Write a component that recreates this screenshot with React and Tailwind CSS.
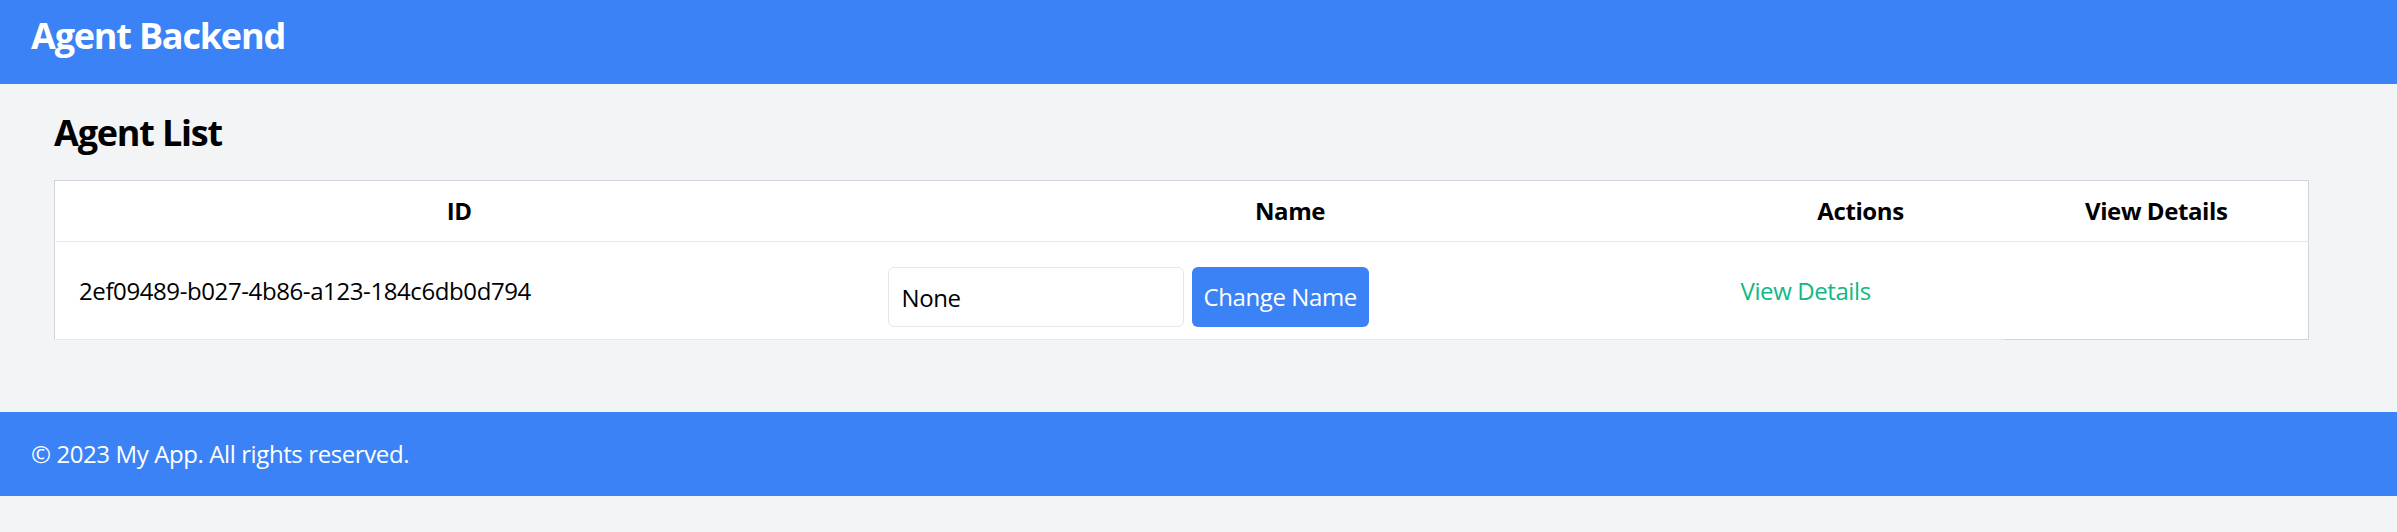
import { useState } from "react";

const agents = [
  { id: "2ef09489-b027-4b86-a123-184c6db0d794", name: "None" },
];

const AgentRow = ({ agent }) => {
  const [name, setName] = useState(agent.name);

  return (
    <tr>
      <td className="border-b border-[#e5e7eb] px-[24px] py-[12px]">{agent.id}</td>
      <td className="border-b border-[#e5e7eb] px-[24px] py-[12px]">
        <div className="mt-[13px] flex items-center gap-[8px]">
          <input
            type="text"
            value={name}
            onChange={(e) => setName(e.target.value)}
            className="h-[60px] w-[296px] rounded-[6px] border border-[#e5e7eb] bg-white px-[13px] text-[24px] leading-[36px] outline-none"
          />
          <button className="h-[60px] rounded-[6px] bg-[#3b82f6] px-[12px] text-[24px] leading-[36px] text-white">
            Change Name
          </button>
        </div>
      </td>
      <td className="border-b border-[#e5e7eb] px-[24px] py-[12px]">
        <a href="#" className="text-[#10b981]">View Details</a>
      </td>
    </tr>
  );
};

export default function App() {
  return (
    <div className="min-h-screen bg-[#f3f4f6] text-[24px] leading-[36px] tracking-[-0.4px] text-black [font-family:'Segoe_UI','Open_Sans',sans-serif]">
      <header className="h-[84px] bg-[#3b82f6] px-[31px] pt-[12px]">
        <h1 className="text-[36px] font-bold leading-[48px] tracking-[-1.2px] text-white">Agent Backend</h1>
      </header>

      <main className="pb-[72px] pl-[54px] pr-[88px] pt-[25px]">
        <h2 className="mb-[23px] text-[36px] font-bold leading-[48px] tracking-[-1.2px]">Agent List</h2>
        <table className="w-full table-fixed border border-[#d1d5db] bg-white">
          <thead>
            <tr>
              <th className="w-[809px] border-b border-[#e5e7eb] px-[24px] py-[12px] text-center font-bold">ID</th>
              <th className="w-[853px] border-b border-[#e5e7eb] px-[24px] py-[12px] text-center font-bold">Name</th>
              <th className="w-[288px] border-b border-[#e5e7eb] px-[24px] py-[12px] text-center font-bold">Actions</th>
              <th className="border-b border-[#e5e7eb] px-[24px] py-[12px] text-center font-bold">View Details</th>
            </tr>
          </thead>
          <tbody>
            {agents.map((agent) => (
              <AgentRow key={agent.id} agent={agent} />
            ))}
          </tbody>
        </table>
      </main>

      <footer className="bg-[#3b82f6] px-[31px] py-[24px] text-white">
        <p>© 2023 My App. All rights reserved.</p>
      </footer>
    </div>
  );
}
